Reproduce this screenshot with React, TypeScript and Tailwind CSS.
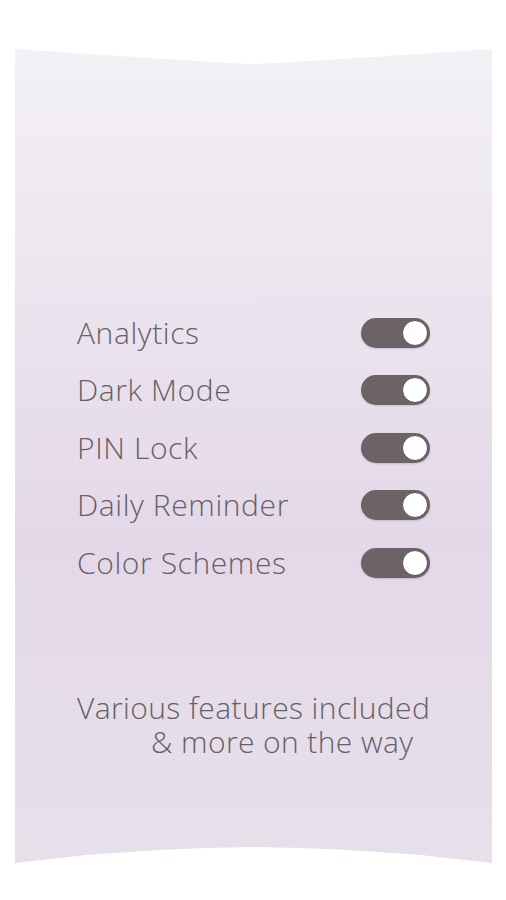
const settings = ['Analytics', 'Dark Mode', 'PIN Lock', 'Daily Reminder', 'Color Schemes'];

const Toggle = () => (
  <div className="flex items-center justify-end w-[69px] h-[30px] rounded-full bg-[#6c6367] pr-[2px] shadow-[0_1px_2px_rgba(0,0,0,0.15)]">
    <div className="w-[26px] h-[26px] rounded-full bg-white border border-[#5a5256]" />
  </div>
);

export default function App() {
  return (
    <div className="w-[506px] h-[900px] bg-white pt-[49px] font-['Open_Sans',sans-serif]">
      <div className="mx-[15px] w-[477px] h-[814px] bg-gradient-to-b from-[#f3f1f5] via-[#e4d8e8] via-60% to-[#e7e0eb] [clip-path:polygon(0_0,25%_8px,45%_14px,50%_15px,55%_14px,75%_8px,100%_0,100%_100%,85%_calc(100%-8px),70%_calc(100%-13px),60%_calc(100%-15px),50%_calc(100%-16px),40%_calc(100%-15px),30%_calc(100%-13px),15%_calc(100%-8px),0_100%)] px-[62px] pt-[255px]">
        <div className="flex flex-col">
          {settings.map((s) => (
            <div key={s} className="flex items-center justify-between h-[57.5px]">
              <span className="text-[30px] font-light tracking-[0.6px] text-[#675f65] leading-none">{s}</span>
              <Toggle />
            </div>
          ))}
        </div>
        <div className="mt-[99px] text-[30px] font-light tracking-[0.4px] leading-[34px] text-[#675f65] whitespace-nowrap">
          <p>Various features included</p>
          <p className="pl-[74px]">&amp; more on the way</p>
        </div>
      </div>
    </div>
  );
}
